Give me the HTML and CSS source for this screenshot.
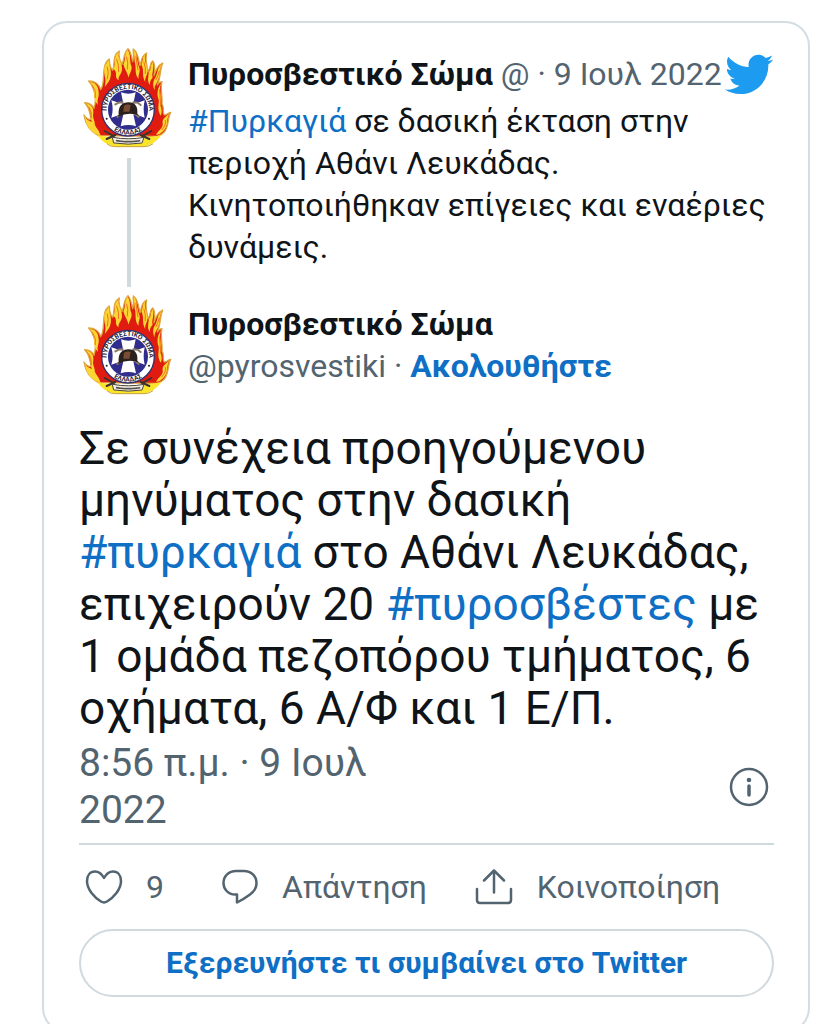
FILE: index.html
```html
<!DOCTYPE html>
<html lang="el">
<head>
    <meta charset="UTF-8">
    <meta name="viewport" content="width=device-width, initial-scale=1.0">
    <title>Πυροσβεστικό Σώμα</title>
    <link rel="stylesheet" href="styles.css">
</head>
<body>
    <!-- Emblem, used by both avatars -->
    <svg class="defs" aria-hidden="true">
        <symbol id="emblem" viewBox="27 39 300 300">
            <!-- flames -->
            <path fill="#e01b10" stroke="#dda53a" stroke-width="4" d="M85 302C62 290 46 268 42 240C48 250 56 254 64 254C58 236 62 222 44 203C58 204 68 210 72 220C80 196 76 160 56 138C74 138 88 148 92 164C104 150 98 116 104 94C106 84 112 76 118 72C118 88 120 98 128 106C136 88 126 60 148 48C144 66 150 78 156 88C164 72 160 54 174 41C184 52 184 66 188 80C194 64 188 52 190 42C206 54 206 78 210 92C216 76 212 64 230 54C224 76 232 94 234 110C244 98 238 84 248 78C258 90 254 106 252 122C258 106 262 92 278 84C268 108 274 124 262 150C266 144 270 140 276 140C270 160 278 180 276 208C284 216 276 238 284 240C292 240 296 232 302 232C292 250 298 270 284 290Q276 300 262 304Z"/>
            <path fill="#fbd532" d="M104 96C110 84 112 78 117 75C116 94 126 104 122 124C120 138 112 146 104 156C112 130 98 118 104 96ZM130 102C140 84 128 62 146 52C142 72 158 84 156 104C154 120 144 122 146 136C130 126 146 112 130 102ZM160 88C168 72 162 56 173 44C184 60 178 80 184 92C188 106 178 114 176 128C170 108 164 104 160 88ZM191 44C204 56 200 82 208 98C212 110 204 118 206 132C192 116 200 96 194 80ZM214 88C220 76 216 66 226 58C220 82 236 96 232 114C230 124 224 130 226 142C214 122 224 108 214 88ZM236 112C246 100 240 90 248 82C254 100 244 116 248 128Q238 138 240 150C230 138 236 126 236 112ZM252 134C264 120 260 98 275 88C266 112 272 126 258 148Q252 156 254 166Q246 152 252 134ZM60 140C76 142 86 154 86 172C88 186 80 194 84 210C64 190 82 168 60 140ZM48 205C64 208 72 220 70 234C66 252 78 258 74 276C56 262 72 234 48 205ZM44 244C52 262 70 256 78 276Q88 288 92 302C66 298 48 274 44 244ZM274 144C264 164 276 180 272 198C270 216 280 228 272 242C260 222 268 208 266 194C258 172 266 154 274 144ZM300 234C286 252 298 270 280 288Q272 298 258 300C266 282 280 282 278 264C276 250 290 244 300 234Z"/>
            <path fill="none" stroke="#f0741c" stroke-width="3" stroke-linecap="round" d="M112 96Q118 112 112 132M140 72Q148 92 146 110M170 66Q176 82 172 102M198 64Q200 84 204 104M222 82Q228 98 226 116M68 152Q80 168 76 188M58 218Q66 232 64 248M268 108Q264 122 258 134M269 164Q270 188 272 214M286 256Q290 268 276 284"/>
            <!-- base -->
            <path fill="#fbe52b" d="M82 301Q178 320 274 301Q252 330 222 335H134Q102 330 82 301Z"/>
            <path fill="none" stroke="#c9a13a" stroke-width="3" d="M112 327Q120 335 134 335H222Q238 335 248 327"/>
            <!-- seal -->
            <circle cx="174" cy="224" r="79" fill="#fff" stroke="#31306f" stroke-width="4"/>
            <circle cx="174" cy="224" r="60" fill="#302d8c"/>
            <path fill="#fff" d="M153 172Q175 180 197 172L190 206Q206 204 224 196Q218 224 224 248Q206 240 190 238L198 274Q175 266 152 274L160 238Q144 240 124 248Q132 224 124 196Q144 204 160 206Z"/>
            <path fill="none" stroke="#8d7a66" stroke-width="6" stroke-linecap="round" d="M136 208Q148 200 158 202M190 202Q202 200 212 210M142 246L154 238M206 246L196 238"/>
            <path fill="#2b211c" d="M146 240C144 214 156 202 176 202S204 216 202 236L208 242Q176 228 144 246Z"/>
            <path fill="#7b4c35" d="M162 212Q172 206 182 210L178 230H160Z"/>
            <path id="ring-top" fill="none" d="M128 270A64 64 0 1 1 220 270"/>
            <text class="ring-text"><textPath href="#ring-top" startOffset="50%">ΠΥΡΟΣΒΕΣΤΙΚΟ ΣΩΜΑ</textPath></text>
            <circle cx="110" cy="251" r="3" fill="#222"/>
            <circle cx="237" cy="251" r="3" fill="#222"/>
            <path id="ring-bottom" fill="none" d="M122 280Q174 318 226 280"/>
            <text class="ring-text"><textPath href="#ring-bottom" startOffset="50%">ΕΛΛΑΔΑΣ</textPath></text>
            <!-- axes and ribbon -->
            <path fill="none" stroke="#3b3531" stroke-width="6" stroke-linecap="round" d="M104 288L132 304M244 288L216 304M110 312L136 300M238 312L212 300"/>
            <path fill="#f2efe6" stroke="#4b453c" stroke-width="3" d="M128 307Q176 316 222 307L216 324Q176 331 132 324Z"/>
            <path fill="none" stroke="#56504d" stroke-width="5" stroke-dasharray="5 3" d="M140 317Q176 323 210 317"/>
        </symbol>
    </svg>

    <article class="card">
        <section class="parent">
            <div class="rail">
                <svg class="avatar" role="img" aria-label="Πυροσβεστικό Σώμα"><use href="#emblem"/></svg>
                <div class="line"></div>
            </div>
            <div class="parent-body">
                <header class="parent-head">
                    <p><b class="name">Πυροσβεστικό Σώμα</b> <span class="muted">@ · 9 Ιουλ 2022</span></p>
                    <svg class="bird" viewBox="0 0 24 24" aria-hidden="true"><path fill="#1d9bf0" d="M23.643 4.937c-.835.37-1.732.62-2.675.733.962-.576 1.7-1.49 2.048-2.578-.9.534-1.897.922-2.958 1.13-.85-.904-2.06-1.47-3.4-1.47-2.572 0-4.658 2.086-4.658 4.66 0 .364.042.718.12 1.06-3.873-.195-7.304-2.05-9.602-4.868-.4.69-.63 1.49-.63 2.342 0 1.616.823 3.043 2.072 3.878-.764-.025-1.482-.234-2.11-.583v.06c0 2.257 1.605 4.14 3.737 4.568-.392.106-.803.162-1.227.162-.3 0-.593-.028-.877-.082.593 1.85 2.313 3.198 4.352 3.234-1.595 1.25-3.604 1.995-5.786 1.995-.376 0-.747-.022-1.112-.065 2.062 1.323 4.51 2.093 7.14 2.093 8.57 0 13.255-7.098 13.255-13.254 0-.2-.005-.402-.014-.602.91-.658 1.7-1.477 2.323-2.41z"/></svg>
                </header>
                <p class="parent-text"><a href="#">#Πυρκαγιά</a> σε δασική έκταση στην περιοχή Αθάνι Λευκάδας. Κινητοποιήθηκαν επίγειες και εναέριες δυνάμεις.</p>
            </div>
        </section>

        <header class="author">
            <svg class="avatar" role="img" aria-label="Πυροσβεστικό Σώμα"><use href="#emblem"/></svg>
            <div>
                <p class="name">Πυροσβεστικό Σώμα</p>
                <p class="muted">@pyrosvestiki · <a class="follow" href="#">Ακολουθήστε</a></p>
            </div>
        </header>

        <p class="message">Σε συνέχεια προηγούμενου μηνύματος στην δασική <a href="#">#πυρκαγιά</a> στο Αθάνι Λευκάδας, επιχειρούν 20 <a href="#">#πυροσβέστες</a> με 1 ομάδα πεζοπόρου τμήματος, 6 οχήματα, 6 Α/Φ και 1 Ε/Π.</p>

        <div class="meta">
            <time datetime="2022-07-09T08:56">8:56 π.μ. · 9 Ιουλ 2022</time>
            <button class="info" type="button" aria-label="Πληροφορίες">
                <svg viewBox="0 0 40 40"><circle cx="20" cy="20" r="18"/><path stroke-width="3.5" d="M20 19V28"/><circle class="dot" cx="20" cy="13" r="2.3"/></svg>
            </button>
        </div>

        <div class="actions">
            <button class="like" type="button">
                <svg viewBox="0 0 40 40"><path d="M20 11C17.5 6.5 14 4.500 11 4.500C6 4.500 3 8.500 3 14C3 22.500 10.500 30.500 17 34.500Q20 36.300 23 34.500C29.500 30.500 37 22.500 37 14C37 8.500 34 4.500 29 4.500C26 4.500 22.500 6.500 20 11Z"/></svg>
                <span>9</span>
            </button>
            <button class="reply" type="button">
                <svg viewBox="0 0 40 40"><path d="M17 27.5H15C8 27.5 3.500 22 3.500 16C3.500 9 9 4 16 4H24C31 4 36.500 9 36.500 16C36.500 21 33.500 25 30 27.500Q24 32 17 35.500Z"/></svg>
                <span>Απάντηση</span>
            </button>
            <button class="share" type="button">
                <svg viewBox="0 0 40 40"><path d="M19 25.5V4M9 13.500L19 3.500L29 13.500M2 22V33Q2 36 5 36H33Q36 36 36 33V22"/></svg>
                <span>Κοινοποίηση</span>
            </button>
        </div>

        <a class="explore" href="#">Εξερευνήστε τι συμβαίνει στο Twitter</a>
    </article>
</body>
</html>
```
FILE: styles.css
```css
* {
    box-sizing: border-box;
}
body {
    margin: 0;
    padding: 21px 20px 21px 42px;
    background-color: #fff;
    color: #0f1419;
    font-family: Roboto, sans-serif;
    font-size: 32px;
    line-height: 42px;
}
p {
    margin: 0;
}
a {
    color: #0f6fc5;
    text-decoration: none;
}
button {
    padding: 0;
    border: none;
    background: none;
    color: inherit;
    font: inherit;
    cursor: pointer;
}
svg {
    fill: none;
    stroke-linecap: round;
    stroke-linejoin: round;
}
.defs {
    position: absolute;
    width: 0;
    height: 0;
}
.ring-text {
    fill: #2b2940;
    font-size: 20px;
    font-weight: 700;
    line-height: 20px;
    text-anchor: middle;
}
.card {
    padding: 25px 34px 34px 35px;
    border: 2px solid #d3dde2;
    border-radius: 25px;
}
.name,
.follow {
    font-weight: 700;
}
.muted {
    color: #536471;
}
.avatar {
    display: block;
    flex: none;
    width: 100px;
    height: 100px;
}
.parent {
    display: flex;
    gap: 9px;
    padding-bottom: 8px;
}
.rail {
    display: flex;
    flex-direction: column;
    align-items: center;
    gap: 10px;
}
.line {
    flex: 1;
    width: 4px;
    background-color: #cfd9de;
}
.parent-body {
    flex: 1;
    padding-bottom: 19px;
}
.parent-head {
    display: flex;
    align-items: center;
    justify-content: space-between;
    height: 52px;
    white-space: nowrap;
}
.bird {
    flex: none;
    width: 51px;
    height: 51px;
}
.author {
    display: flex;
    align-items: center;
    gap: 9px;
}
.message {
    padding-top: 27px;
    font-size: 46px;
    line-height: 52px;
}
.meta {
    display: flex;
    align-items: center;
    justify-content: space-between;
    padding: 6px 5px 9px 0;
    border-bottom: 2px solid #cfd9de;
    color: #536471;
    font-size: 39px;
    line-height: 47px;
}
.meta time {
    max-width: 320px;
}
.info svg,
.actions svg {
    display: block;
    width: 40px;
    height: 40px;
    stroke: #536471;
    stroke-width: 2.5px;
}
.info .dot {
    fill: #536471;
    stroke: none;
}
.actions {
    display: flex;
    gap: 48px;
    padding: 21px 5px;
    color: #536471;
}
.actions button {
    display: flex;
    align-items: center;
    gap: 22px;
}
.actions .like {
    min-width: 88px;
}
.explore {
    display: block;
    padding: 11px 20px;
    border: 2px solid #cfd9de;
    border-radius: 34px;
    font-size: 30px;
    font-weight: 700;
    text-align: center;
}
```
